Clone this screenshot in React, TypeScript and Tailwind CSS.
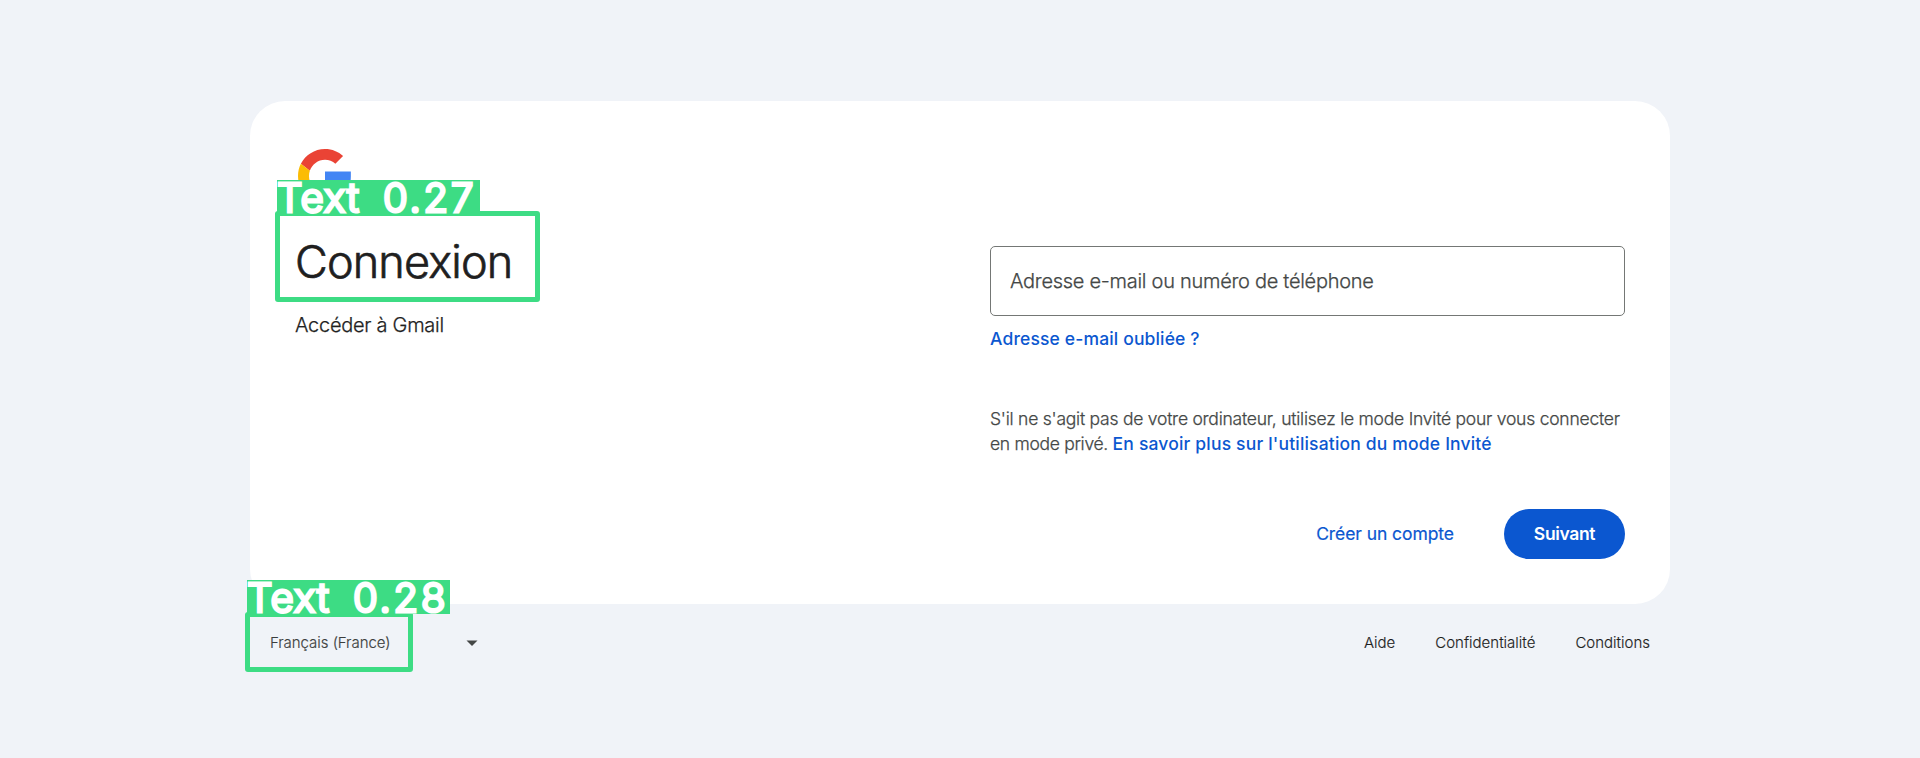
function GoogleLogo() {
  return (
    <svg className="block h-[54px] w-[54px]" viewBox="0 0 48 48" aria-hidden="true">
      <path fill="#EA4335" d="M24 9.5c3.54 0 6.71 1.22 9.21 3.6l6.85-6.85C35.9 2.38 30.47 0 24 0 14.62 0 6.51 5.38 2.56 13.22l7.98 6.19C12.43 13.72 17.74 9.5 24 9.5z" />
      <path fill="#4285F4" d="M46.98 24.55V20H24v9.02h12.94c-.58 2.96-2.26 5.48-4.78 7.18l7.73 6c4.51-4.18 7.09-10.36 7.09-17.65z" />
      <path fill="#FBBC05" d="M10.53 28.59c-.48-1.45-.76-2.99-.76-4.59s.27-3.14.76-4.59l-7.98-6.19C.92 16.46 0 20.12 0 24c0 3.88.92 7.54 2.56 10.78l7.97-6.19z" />
      <path fill="#34A853" d="M24 48c6.48 0 11.93-2.13 15.89-5.81l-7.73-6c-2.15 1.45-4.92 2.3-8.16 2.3-6.26 0-11.57-4.22-13.47-9.91l-7.98 6.19C6.51 42.62 14.62 48 24 48z" />
    </svg>
  );
}

function Label({ name, score }: { name: string; score: string }) {
  return (
    <div className="flex h-[34px] w-[203px] gap-[20px] whitespace-nowrap bg-[#3ddc84] text-[40px] font-light leading-[36px] text-white [-webkit-text-stroke:3px_white] [stroke-linejoin:round]">
      <span className="w-[86px] tracking-[1.2px]">{name}</span>
      <span className="tracking-[2.8px]">{score}</span>
    </div>
  );
}

export default function App() {
  return (
    <div className="relative flex h-[758px] w-[1920px] flex-col items-center overflow-hidden bg-[#f0f3f8] pt-[101px] font-['Inter',sans-serif] text-[#1f1f1f]">
      <main className="flex h-[503px] w-[1420px] shrink-0 rounded-[35px] bg-white pt-[47px] pr-[45px] pl-[45px]">
        <section className="flex w-[695px] shrink-0 flex-col">
          <div className="pt-px pl-[3px]">
            <GoogleLogo />
          </div>
          <h1 className="mt-[31px] text-[45px] font-light leading-[55px] tracking-[-0.85px] [-webkit-text-stroke:0.7px_#1f1f1f]">Connexion</h1>
          <p className="mt-[21px] text-[20px] font-light leading-[30px] tracking-[-0.28px] [-webkit-text-stroke:0.25px_#1f1f1f]">Accéder à Gmail</p>
        </section>
        <section className="flex w-[635px] shrink-0 flex-col pt-[98px]">
          <div className="flex h-[70px] items-center rounded-[5px] border border-[#747775] pl-[19px] text-[20px] font-light tracking-[-0.28px] text-[#444746] [-webkit-text-stroke:0.25px_#444746]">
            Adresse e-mail ou numéro de téléphone
          </div>
          <a className="mt-[10px] text-[17.5px] font-medium leading-[25px] tracking-[0.15px] text-[#0b57d0]">Adresse e-mail oubliée ?</a>
          <p className="mt-[55px] whitespace-nowrap text-[17.5px] font-light leading-[25px] text-[#444746]">
            <span className="tracking-[-0.235px] [-webkit-text-stroke:0.25px_#444746]">S'il ne s'agit pas de votre ordinateur, utilisez le mode Invité pour vous connecter</span>
            <br />
            <span className="tracking-[-0.3px] [-webkit-text-stroke:0.25px_#444746]">en mode privé. </span>
            <a className="font-medium tracking-[0.18px] text-[#0b57d0]">En savoir plus sur l'utilisation du mode Invité</a>
          </p>
          <div className="mt-[53px] flex h-[50px] items-center justify-end">
            <button className="mr-[50px] text-[17.5px] font-normal tracking-[-0.07px] text-[#0b57d0] [-webkit-text-stroke:0.2px_#0b57d0]">Créer un compte</button>
            <button className="h-[50px] w-[121px] rounded-full bg-[#0b57d0] text-[17.5px] font-semibold tracking-[-0.35px] text-white">Suivant</button>
          </div>
        </section>
      </main>
      <footer className="flex h-[78px] w-[1420px] items-center pr-[20px] pl-[20px] text-[15px] font-light [-webkit-text-stroke:0.15px_#1f1f1f]">
        <div className="flex w-[208px] items-center justify-between text-[#444746]">
          <span className="tracking-[-0.04px]">Français (France)</span>
          <svg className="h-[6px] w-[12px]" viewBox="0 0 12 6">
            <path d="M0.5 0.5h11L6 6z" fill="#444746" />
          </svg>
        </div>
        <nav className="ml-auto flex gap-[40px]">
          <a>Aide</a>
          <a>Confidentialité</a>
          <a>Conditions</a>
        </nav>
      </footer>

      <div className="absolute top-[211px] left-[275px] h-[91px] w-[265px] rounded-[3px] border-[5px] border-[#3ddc84]" />
      <div className="absolute top-[180px] left-[277px]">
        <Label name="Text" score="0.27" />
      </div>
      <div className="absolute top-[612px] left-[245px] h-[60px] w-[168px] rounded-[3px] border-[5px] border-[#3ddc84]" />
      <div className="absolute top-[580px] left-[247px]">
        <Label name="Text" score="0.28" />
      </div>
    </div>
  );
}
